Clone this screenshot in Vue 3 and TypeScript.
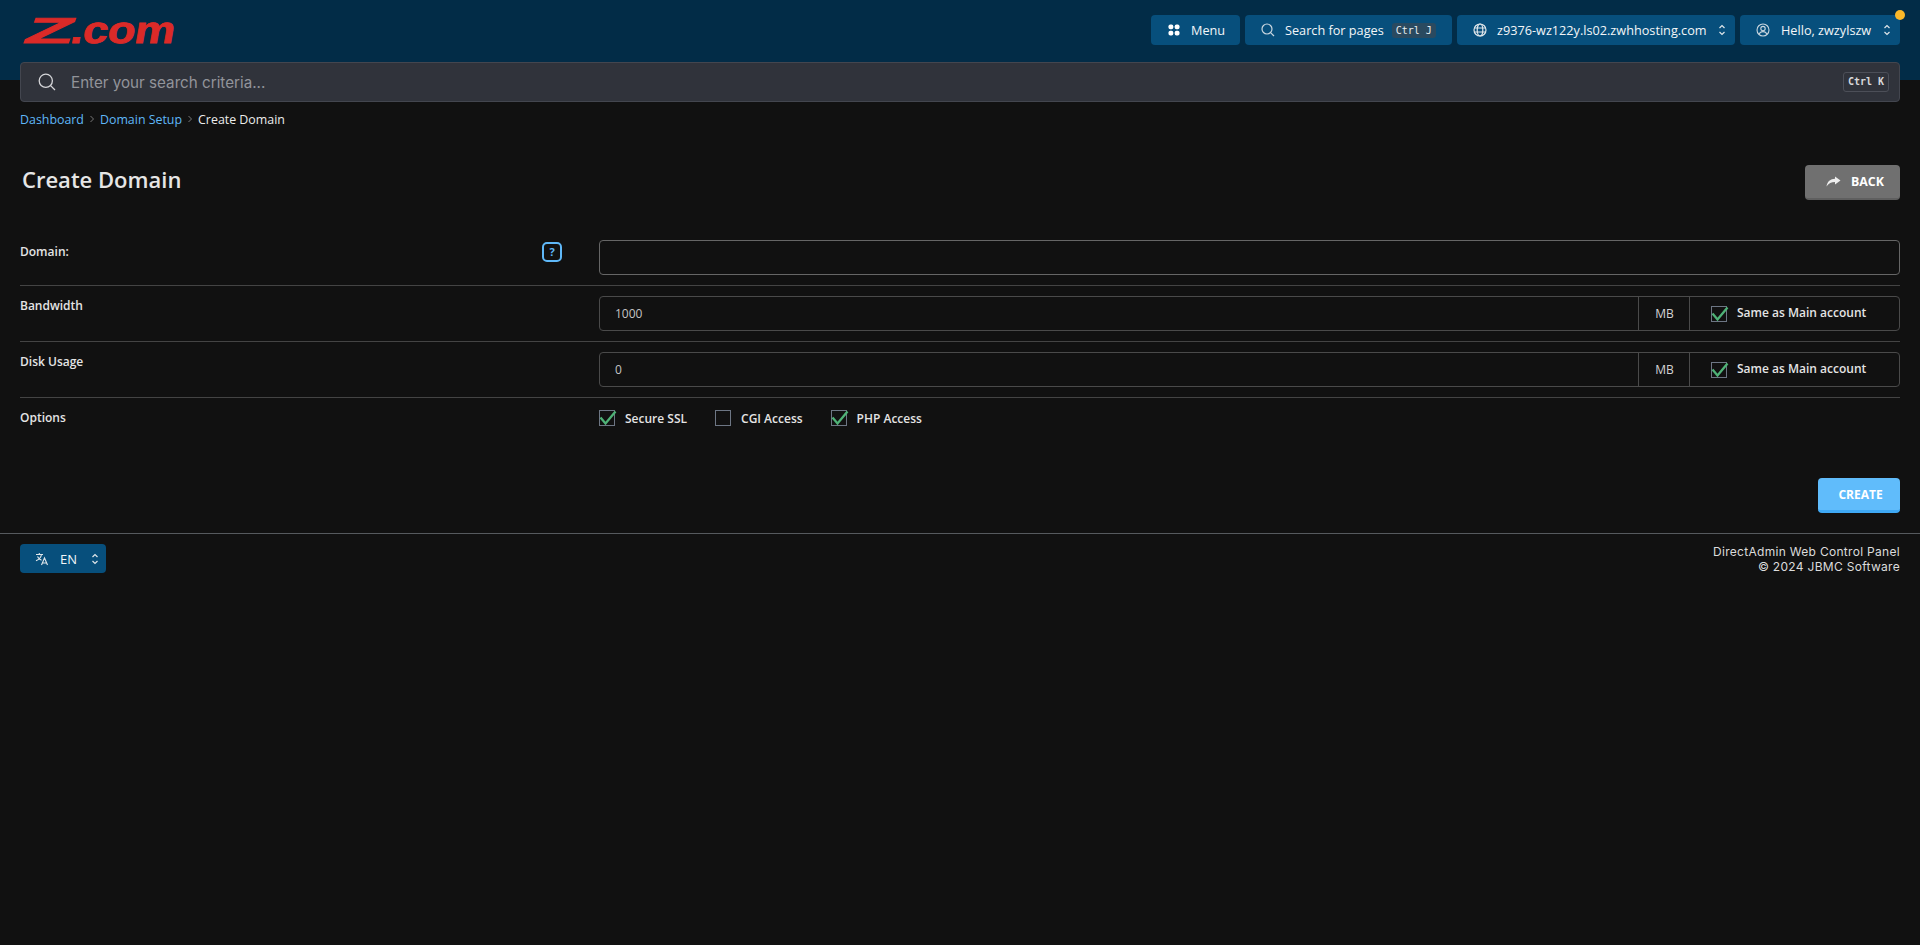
<script setup lang="ts">
const rows = [
  { label: 'Bandwidth', value: '1000' },
  { label: 'Disk Usage', value: '0' },
]
const options = [
  { label: 'Secure SSL', checked: true },
  { label: 'CGI Access', checked: false },
  { label: 'PHP Access', checked: true },
]
</script>

<template>
  <div class="page">
    <header class="top">
      <div class="bar">
        <div class="logo"><span class="logo-z">Z</span><span class="logo-com">.com</span></div>
        <nav class="nav">
          <button class="nav-btn menu">
            <svg width="12" height="12" viewBox="0 0 12 12" fill="#fff"><rect x="0.5" y="0.5" width="4.8" height="4.8" rx="1.8"/><rect x="6.7" y="0.5" width="4.8" height="4.8" rx="1.8"/><rect x="0.5" y="6.7" width="4.8" height="4.8" rx="1.8"/><rect x="6.7" y="6.7" width="4.8" height="4.8" rx="1.8"/></svg>
            <span>Menu</span>
          </button>
          <button class="nav-btn pages">
            <svg width="14" height="14" viewBox="0 0 14 14" fill="none" stroke="#c9d6df" stroke-width="1.2"><circle cx="6" cy="6" r="5"/><path d="M9.8 9.8 13 13"/></svg>
            <span>Search for pages</span>
            <kbd class="nav-kbd">Ctrl J</kbd>
          </button>
          <button class="nav-btn host">
            <svg width="14" height="14" viewBox="0 0 14 14" fill="none" stroke="#dfe6ea" stroke-width="1.2"><circle cx="7" cy="7" r="6"/><ellipse cx="7" cy="7" rx="2.8" ry="6"/><path d="M1.4 5h11.2M1.4 9h11.2"/></svg>
            <span>z9376-wz122y.ls02.zwhhosting.com</span>
            <svg class="updown" width="8" height="12" viewBox="0 0 8 12" fill="none" stroke="#dfe6ea" stroke-width="1.2"><path d="M1.5 4 4 1.5 6.5 4M1.5 8 4 10.5 6.5 8"/></svg>
          </button>
          <button class="nav-btn user">
            <svg width="14" height="14" viewBox="0 0 14 14" fill="none" stroke="#c9d6df" stroke-width="1.1"><circle cx="7" cy="7" r="6"/><circle cx="7" cy="5.6" r="2.2"/><path d="M3.2 11.2c.6-1.8 2-2.6 3.8-2.6s3.2.8 3.8 2.6"/></svg>
            <span>Hello, zwzylszw</span>
            <svg class="updown" width="8" height="12" viewBox="0 0 8 12" fill="none" stroke="#dfe6ea" stroke-width="1.2"><path d="M1.5 4 4 1.5 6.5 4M1.5 8 4 10.5 6.5 8"/></svg>
            <i class="dot"></i>
          </button>
        </nav>
      </div>
      <div class="search">
        <svg width="18" height="18" viewBox="0 0 18 18" fill="none" stroke="#d5d6d9" stroke-width="1.3"><circle cx="7.8" cy="7.8" r="6.6"/><path d="M12.6 12.6 17 17"/></svg>
        <span class="placeholder">Enter your search criteria...</span>
        <kbd class="search-kbd">Ctrl K</kbd>
      </div>
    </header>

    <div class="crumbs">
      <a>Dashboard</a>
      <svg class="sep" width="6" height="8" viewBox="0 0 6 8" fill="none" stroke="#777" stroke-width="1"><path d="M1.5 1 4.500 4 1.500 7"/></svg>
      <a>Domain Setup</a>
      <svg class="sep" width="6" height="8" viewBox="0 0 6 8" fill="none" stroke="#777" stroke-width="1"><path d="M1.500 1 4.500 4 1.500 7"/></svg>
      <span>Create Domain</span>
    </div>

    <div class="head">
      <h1>Create Domain</h1>
      <button class="back">
        <svg width="15" height="11" viewBox="0 0 15 11" fill="#eee"><path d="M9 0.5 14.500 4.500 9 8.500V6C5.500 6 2.500 7.200 0.500 10.500 1.200 5.500 4.500 2.900 9 2.800Z"/></svg>
        <span>BACK</span>
      </button>
    </div>

    <main class="form">
      <section class="row">
        <div class="label">
          <span class="domain">Domain:</span>
          <i class="help">?</i>
        </div>
        <div class="field plain"></div>
      </section>
      <section v-for="r in rows" :key="r.label" class="row">
        <div class="label"><span>{{ r.label }}</span></div>
        <div class="group">
          <div class="value">{{ r.value }}</div>
          <div class="unit">MB</div>
          <div class="same">
            <span class="box">
              <svg width="18" height="16" viewBox="0 0 18 16" fill="none" stroke="#4fb277" stroke-width="2.300"><path d="M1.500 7.500 6.500 13.500 16.500 1.500"/></svg>
            </span>
            <span class="same-text">Same as Main account</span>
          </div>
        </div>
      </section>
      <section class="row last">
        <div class="label"><span>Options</span></div>
        <div class="opts">
          <label v-for="o in options" :key="o.label" class="opt">
            <span class="box">
              <svg v-if="o.checked" width="18" height="16" viewBox="0 0 18 16" fill="none" stroke="#4fb277" stroke-width="2.300"><path d="M1.500 7.500 6.500 13.500 16.500 1.500"/></svg>
            </span>
            <span>{{ o.label }}</span>
          </label>
        </div>
      </section>
    </main>

    <div class="actions"><button class="create">CREATE</button></div>

    <footer class="foot">
      <button class="lang">
        <svg width="14" height="14" viewBox="0 0 14 14" fill="none" stroke="#dfe6ea" stroke-width="1.1"><path d="M1 2.500h7M4.300 1v1.500M6.500 2.500c-.5 3-2.500 5-5.500 6.300M2.500 4.500c.8 1.800 2.200 3 4 3.800M6.500 13l3-7 3 7M7.500 11h4"/></svg>
        <span>EN</span>
        <svg class="updown" width="8" height="12" viewBox="0 0 8 12" fill="none" stroke="#dfe6ea" stroke-width="1.2"><path d="M1.500 4 4 1.500 6.500 4M1.500 8 4 10.500 6.500 8"/></svg>
      </button>
      <div class="copy">
        <div>DirectAdmin Web Control Panel</div>
        <div>© 2024 JBMC Software</div>
      </div>
    </footer>
  </div>
</template>

<style>
html, body { background: #111111; }
</style>

<style scoped>
.page {
  width: 1920px;
  height: 945px;
  overflow: hidden;
  background: #111111;
  color: #e4e4e4;
  font-family: "Open Sans", "Liberation Sans", sans-serif;
  font-size: 12px;
}
svg { flex: none; }
button { font-family: inherit; border: 0; cursor: pointer; white-space: nowrap; }
.top {
  padding: 15px 20px 0;
  background: linear-gradient(#022c47 80px, transparent 80px);
}
.bar { display: flex; justify-content: space-between; height: 47px; }
.logo {
  display: flex;
  align-items: baseline;
  height: 30px;
  color: #db2a28;
  font-family: "Liberation Sans", sans-serif;
  font-weight: 700;
  line-height: 30px;
  -webkit-text-stroke: 0.8px #db2a28;
}
.logo-z {
  display: inline-block;
  margin: 0 26px 0 1px;
  font-size: 36px;
  transform: skewX(-20deg) scaleX(2.2);
  transform-origin: left bottom;
}
.logo-com {
  display: inline-block;
  font-size: 38px;
  transform: skewX(-10deg) scaleX(1.19);
  transform-origin: left bottom;
  letter-spacing: -0.5px;
}
.nav { display: flex; gap: 5px; height: 30px; }
.nav-btn {
  position: relative;
  display: flex;
  align-items: center;
  height: 30px;
  padding-right: 0;
  border-radius: 4px;
  background: #074f7c;
  color: #f3f6f8;
  font-size: 12.7px;
}
.menu { width: 89px; padding-left: 17px; gap: 11px; }
.pages { width: 207px; padding-left: 16px; gap: 10px; }
.host { width: 278px; padding-left: 16px; gap: 10px; }
.user { width: 160px; padding-left: 16px; gap: 11px; }
.host .updown, .user .updown { margin-left: auto; margin-right: 9px; }
.nav-kbd {
  margin-left: -2px;
  padding: 0 4px;
  height: 15px;
  border-radius: 3px;
  background: #2a4a60;
  color: #e8edf0;
  font: 400 10px/15px "DejaVu Sans Mono", monospace;
}
.dot {
  position: absolute;
  top: -5px;
  right: -5px;
  width: 10px;
  height: 10px;
  border-radius: 50%;
  background: #fbb829;
}
.search {
  display: flex;
  align-items: center;
  height: 40px;
  box-sizing: border-box;
  padding: 0 10px 0 17px;
  border: 1px solid #43464f;
  border-radius: 4px;
  background: #30333b;
}
.placeholder {
  margin-left: 15px;
  color: #92949a;
  font-family: "Inter", sans-serif;
  font-size: 15.2px;
}
.search-kbd {
  margin-left: auto;
  height: 18px;
  padding: 0 4px;
  border: 1px solid #4c4f58;
  border-radius: 3px;
  color: #d8d8da;
  font: 700 10px/18px "DejaVu Sans Mono", monospace;
}
.crumbs {
  display: flex;
  align-items: center;
  height: 18px;
  margin: 8px 20px 0;
  font-size: 12.4px;
  color: #ececec;
}
.crumbs a { color: #5fb8f8; }
.sep { margin: 0 5px; }
.head {
  display: flex;
  justify-content: space-between;
  align-items: center;
  margin: 37px 20px 0 22px;
  height: 35px;
}
h1 { margin: 0 0 8px; font-size: 22px; font-weight: 600; color: #e6e6e6; }
.back {
  display: flex;
  align-items: center;
  gap: 10px;
  width: 95px;
  height: 35px;
  padding: 0 0 0 21px;
  border-radius: 4px;
  background: #707070;
  border-bottom: 2px solid #5f5f5f;
  color: #fff;
  font-size: 12.4px;
  font-weight: 700;
}
.form { margin: 40px 20px 0; }
.row {
  display: flex;
  padding: 0 0 10px;
  margin-bottom: 10px;
  border-bottom: 1px solid #444;
}
.row.last { border-bottom: 0; padding: 0; margin: 0; }
.label {
  display: flex;
  justify-content: space-between;
  align-items: flex-start;
  flex: 0 0 579px;
  box-sizing: border-box;
  padding-right: 37px;
  font-weight: 600;
  font-size: 12px;
  line-height: 20px;
  color: #e4e4e4;
}
.label .domain { margin-top: 2px; }
.help {
  display: block;
  box-sizing: border-box;
  width: 20px;
  height: 20px;
  margin-top: 2px;
  border: 2px solid #5fb8f8;
  border-radius: 5px;
  color: #5fb8f8;
  font-size: 11px;
  font-style: normal;
  font-weight: 700;
  line-height: 16px;
  text-align: center;
}
.field.plain {
  flex: 1;
  height: 35px;
  box-sizing: border-box;
  border: 1px solid #666;
  border-radius: 4px;
}
.group {
  flex: 1;
  display: flex;
  height: 35px;
  box-sizing: border-box;
  border: 1px solid #4a4a4a;
  border-radius: 4px;
  font-size: 12px;
  line-height: 33px;
}
.value { flex: 1; padding-left: 15px; color: #c4c4c4; }
.unit { width: 49px; padding-left: 1px; text-align: center; border-left: 1px solid #4a4a4a; color: #d4d4d4; }
.same {
  display: flex;
  align-items: center;
  gap: 10px;
  width: 210px;
  box-sizing: border-box;
  padding-left: 21px;
  border-left: 1px solid #4a4a4a;
  font-weight: 600;
}
.same-text { margin-bottom: 2px; }
.box {
  position: relative;
  flex: none;
  display: block;
  width: 16px;
  height: 16px;
  box-sizing: border-box;
  border: 1px solid #6d7684;
}
.box svg { position: absolute; left: -1px; top: -1px; }
.opts { display: flex; gap: 28px; height: 20px; align-items: center; }
.opt { display: flex; align-items: center; gap: 10px; font-weight: 600; }
.actions { display: flex; justify-content: flex-end; margin: 50px 20px 0; }
.create {
  width: 82px;
  height: 35px;
  padding: 0 0 0 3px;
  border-radius: 4px;
  background: #60bcfb;
  border-bottom: 3px solid #3fa9f5;
  color: #fff;
  font-size: 12px;
  font-weight: 700;
}
.foot {
  display: flex;
  justify-content: space-between;
  margin-top: 20px;
  padding: 10px 20px 0;
  border-top: 1px solid #565a5e;
}
.lang {
  display: flex;
  align-items: center;
  width: 86px;
  height: 29px;
  padding: 0 0 0 15px;
  border-radius: 4px;
  background: #074f7c;
  color: #f3f6f8;
  font-size: 13px;
}
.lang span { margin-left: 11px; }
.lang .updown { margin-left: 14px; }
.copy {
  text-align: right;
  font-family: "Inter", sans-serif;
  font-size: 12px;
  letter-spacing: 0.3px;
  line-height: 15px;
  color: #dcdcdc;
}
</style>
